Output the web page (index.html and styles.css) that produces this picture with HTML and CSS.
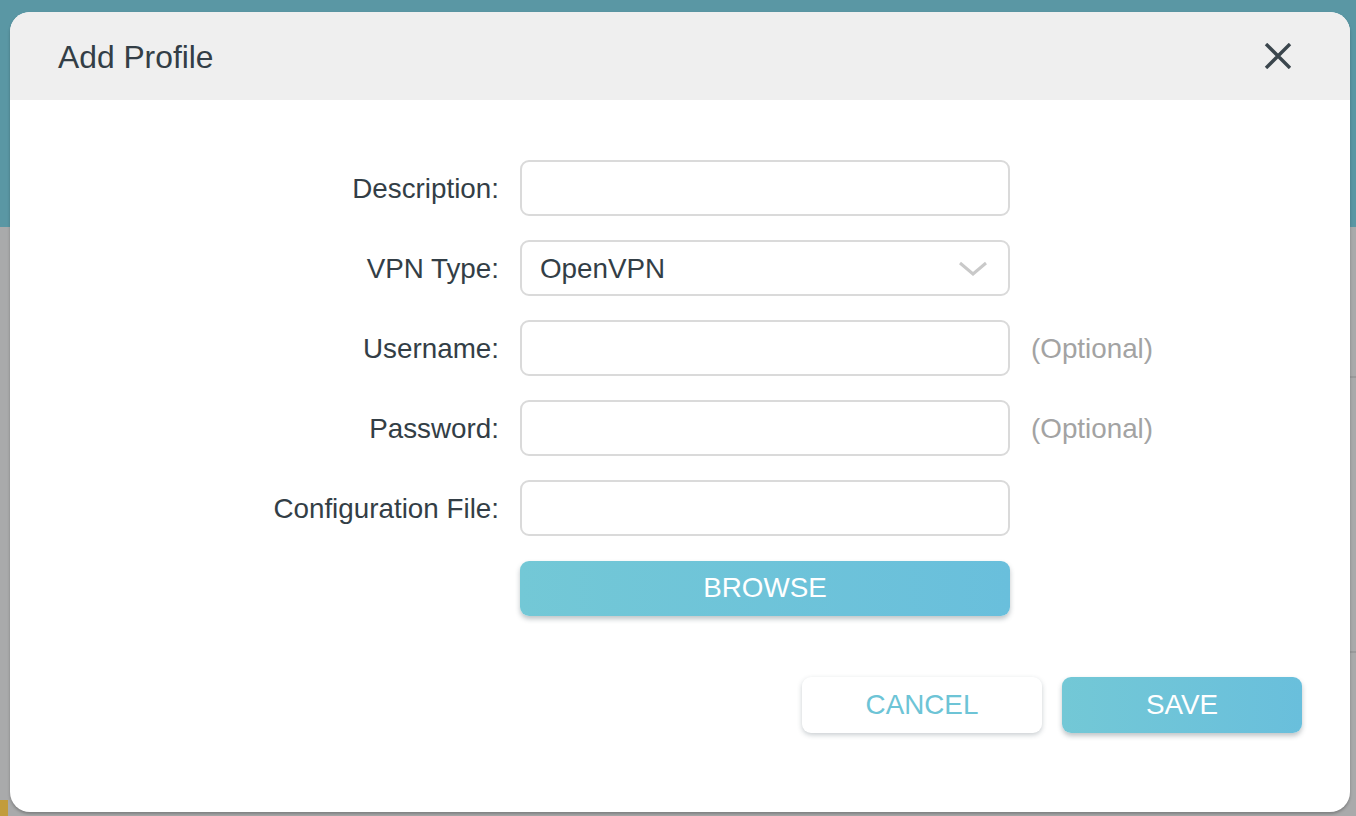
FILE: index.html
```html
<!DOCTYPE html>
<html lang="en">
<head>
<meta charset="utf-8">
<title>Add Profile</title>
<link rel="stylesheet" href="styles.css">
</head>
<body>
<div class="backdrop">
  <div class="gold"></div>
  <div class="line line-a"></div>
  <div class="line line-b"></div>
  <div class="modal">
    <div class="modal-header">
      <h1 class="modal-title">Add Profile</h1>
      <button class="close" aria-label="Close">
        <svg width="28" height="26" viewBox="0 0 28 26"><path d="M2 1 L26 25 M26 1 L2 25" stroke="#3b464d" stroke-width="3.4" stroke-linecap="butt" fill="none"/></svg>
      </button>
    </div>
    <div class="modal-body">
      <div class="form">
        <label class="label">Description:</label>
        <div class="field"></div>
        <span></span>

        <label class="label">VPN Type:</label>
        <div class="field select">
          <span class="select-value">OpenVPN</span>
          <svg class="chevron" width="30" height="16" viewBox="0 0 30 16"><path d="M2 2 L15 13 L28 2" stroke="#c9c9c9" stroke-width="3" fill="none"/></svg>
        </div>
        <span></span>

        <label class="label">Username:</label>
        <div class="field"></div>
        <span class="hint">(Optional)</span>

        <label class="label">Password:</label>
        <div class="field"></div>
        <span class="hint">(Optional)</span>

        <label class="label">Configuration File:</label>
        <div class="field"></div>
        <span></span>

        <span></span>
        <button class="btn btn-primary browse">BROWSE</button>
        <span></span>
      </div>
      <div class="actions">
        <button class="btn btn-secondary">CANCEL</button>
        <button class="btn btn-primary">SAVE</button>
      </div>
    </div>
  </div>
</div>
</body>
</html>
```

FILE: styles.css
```css
* { box-sizing: border-box; }
html, body { margin: 0; padding: 0; }
body {
  font-family: "Liberation Sans", Arial, Helvetica, sans-serif;
  color: #333e46;
}
.backdrop {
  position: relative;
  width: 1356px;
  height: 816px;
  overflow: hidden;
  background: linear-gradient(to bottom, #5a97a4 0, #5a97a4 227px, #a9aaab 227px, #a9aaab 100%);
  padding: 12px 6px 0 10px;
}
.gold {
  position: absolute;
  left: 0; top: 800px;
  width: 8px; height: 16px;
  background: #c29c3c;
}
.line {
  position: absolute;
  right: 0;
  width: 8px;
  height: 2px;
  background: #999a9b;
}
.line-a { top: 376px; }
.line-b { top: 651px; }
.modal {
  position: relative;
  width: 1340px;
  height: 800px;
  background: #fff;
  border-radius: 20px;
  overflow: hidden;
  box-shadow: 0 2px 3px rgba(0,0,0,0.25);
  display: flex;
  flex-direction: column;
}
.modal-header {
  height: 88px;
  background: #efefef;
  display: flex;
  align-items: center;
  justify-content: space-between;
  padding: 0 58px 0 48px;
  flex-shrink: 0;
}
.modal-title {
  margin: 0;
  font-size: 31.8px;
  font-weight: normal;
  color: #333e46;
  padding-top: 2px;
}
.close {
  background: none;
  border: 0;
  padding: 0;
  width: 28px;
  height: 26px;
  cursor: pointer;
  display: flex;
}
.modal-body {
  padding: 60px 48px 0 0;
  display: flex;
  flex-direction: column;
}
.form {
  display: grid;
  grid-template-columns: 489px 490px auto;
  grid-auto-rows: 56px;
  column-gap: 21px;
  row-gap: 24px;
  align-items: center;
}
.label {
  text-align: right;
  font-size: 27.8px;
  color: #333e46;
  padding-top: 2px;
}
.field {
  height: 56px;
  border: 2px solid #dadada;
  border-radius: 9px;
  background: #fff;
}
.select {
  display: flex;
  align-items: center;
  justify-content: space-between;
  padding: 0 20px 0 18px;
}
.select-value {
  font-size: 27.8px;
  color: #333e46;
  padding-top: 2px;
}
.chevron { margin-top: 2px; }
.hint {
  font-size: 27.8px;
  color: #a3a3a3;
  padding-top: 2px;
}
.btn {
  font-family: "Liberation Sans", Arial, Helvetica, sans-serif;
  font-size: 27.8px;
  border: 0;
  border-radius: 9px;
  height: 56px;
  cursor: pointer;
  padding: 0;
}
.btn-primary {
  background: linear-gradient(to right, #73c8d6, #69bfdc);
  color: #fff;
  box-shadow: 0 3px 5px rgba(40,60,70,0.3);
}
.btn-secondary {
  background: #fff;
  color: #6dc4d6;
  box-shadow: 0 2px 5px rgba(40,60,70,0.25);
}
.browse {
  height: 55px;
  width: 490px;
}
.actions {
  display: flex;
  justify-content: flex-end;
  gap: 20px;
  margin-top: 61px;
}
.actions .btn { width: 240px; }
```
